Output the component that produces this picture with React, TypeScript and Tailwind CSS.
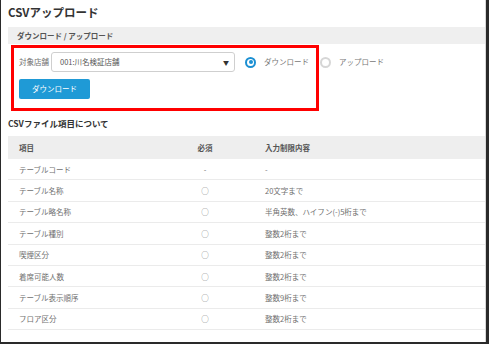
import type { ReactNode } from 'react'

const rows = [
  { name: 'テーブルコード', req: '-', rule: '-' },
  { name: 'テーブル名称', req: '○', rule: '20文字まで' },
  { name: 'テーブル略名称', req: '○', rule: '半角英数、ハイフン(-)5桁まで' },
  { name: 'テーブル種別', req: '○', rule: '整数2桁まで' },
  { name: '喫煙区分', req: '○', rule: '整数2桁まで' },
  { name: '着席可能人数', req: '○', rule: '整数2桁まで' },
  { name: 'テーブル表示順序', req: '○', rule: '整数9桁まで' },
  { name: 'フロア区分', req: '○', rule: '整数2桁まで' },
]

function Radio({ checked, children }: { checked?: boolean; children: ReactNode }) {
  return (
    <label className="flex items-center gap-[8px]">
      {checked ? (
        <span className="w-[11px] h-[11px] rounded-full border-2 border-[#1b8fd2] flex items-center justify-center">
          <span className="w-[4px] h-[4px] rounded-full bg-[#1b8fd2]" />
        </span>
      ) : (
        <span className="w-[11px] h-[11px] rounded-full border-2 border-[#d6d6d6]" />
      )}
      <span className="text-[7.5px] text-[#777]">{children}</span>
    </label>
  )
}

export default function App() {
  return (
    <div
      className="w-[489px] h-[344px] bg-white border-l border-r-[3px] border-b-2 border-[#2a2a2a] overflow-hidden"
      style={{ fontFamily: '"Noto Sans CJK JP", "Noto Sans", sans-serif' }}
    >
      <div className="h-full pl-[7px] border-r border-[#d8d8d8] relative">
        {/* Title */}
        <h1 className="pt-[3px] h-[27px] text-[11.5px] font-bold text-[#333] leading-[18px]">CSVアップロード</h1>

        {/* Section band */}
        <div className="h-[17px] bg-[#efefef] pl-[9px] flex items-center text-[7.5px] font-bold text-[#555]">
          ダウンロード / アップロード
        </div>

        {/* Form */}
        <div className="h-[67px] pl-[11px] pt-[8px]">
          <div className="flex items-center h-[20px]">
            <span className="text-[7.5px] text-[#707070] w-[32px]">対象店舗</span>
            <div className="w-[184px] h-[20px] border border-[#cfcfcf] rounded-[3px] flex items-center justify-between pl-[8px] pr-[5px]">
              <span className="text-[7.5px] text-[#555]">001:川名検証店舗</span>
              <span className="text-[6px] text-[#333]">▼</span>
            </div>
            <div className="ml-[10px] flex items-center gap-[11px]">
              <Radio checked>ダウンロード</Radio>
              <Radio>アップロード</Radio>
            </div>
          </div>
          <button className="mt-[7px] w-[71px] h-[20px] bg-[#1f9ad6] rounded-[2px] text-white text-[7.5px] flex items-center justify-center">
            ダウンロード
          </button>
        </div>

        {/* Red annotation frame */}
        <div className="absolute left-[10px] top-[45px] w-[308px] h-[66px] border-[3px] border-[#ff0000] pointer-events-none" />

        {/* Table section */}
        <h2 className="h-[25px] pt-[5px] text-[8.5px] font-bold text-[#333] leading-[14px]">CSVファイル項目について</h2>
        <div className="grid grid-cols-[167px_60px_1fr] h-[23px] bg-[#eeeeee] items-center text-[7.5px] font-bold text-[#555]">
          <span className="pl-[11px]">項目</span>
          <span className="text-center">必須</span>
          <span className="pl-[30px]">入力制限内容</span>
        </div>
        {rows.map((r) => (
          <div
            key={r.name}
            className="grid grid-cols-[167px_60px_1fr] h-[21.4px] items-center border-b border-[#ebebeb] text-[7.5px] text-[#707070]"
          >
            <span className="pl-[11px]">{r.name}</span>
            <span className="text-center">{r.req}</span>
            <span className="pl-[30px]">{r.rule}</span>
          </div>
        ))}
      </div>
    </div>
  )
}
